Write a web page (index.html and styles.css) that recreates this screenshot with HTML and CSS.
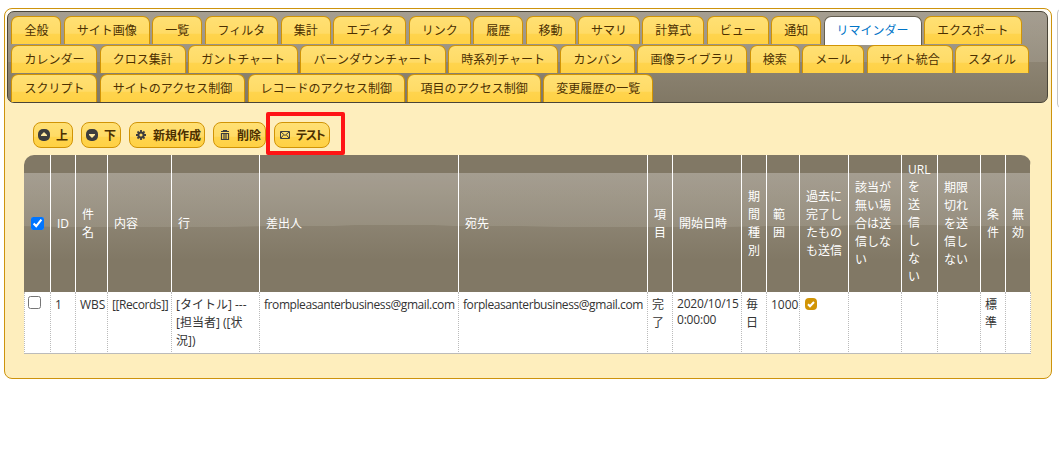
FILE: index.html
```html
<!DOCTYPE html>
<html lang="ja">
<head>
  <meta charset="UTF-8" />
  <meta name="viewport" content="width=device-width, initial-scale=1.0" />
  <title>リマインダー</title>
  <link rel="stylesheet" href="styles.css">
</head>
<body>
  <div class="page">
    <main class="editor">
      <ul class="tabs">
        <li>全般</li>
        <li>サイト画像</li>
        <li>一覧</li>
        <li>フィルタ</li>
        <li>集計</li>
        <li>エディタ</li>
        <li>リンク</li>
        <li>履歴</li>
        <li>移動</li>
        <li>サマリ</li>
        <li>計算式</li>
        <li>ビュー</li>
        <li>通知</li>
        <li class="active">リマインダー</li>
        <li>エクスポート</li>
        <li>カレンダー</li>
        <li>クロス集計</li>
        <li>ガントチャート</li>
        <li>バーンダウンチャート</li>
        <li>時系列チャート</li>
        <li>カンバン</li>
        <li>画像ライブラリ</li>
        <li>検索</li>
        <li>メール</li>
        <li>サイト統合</li>
        <li>スタイル</li>
        <li>スクリプト</li>
        <li>サイトのアクセス制御</li>
        <li>レコードのアクセス制御</li>
        <li>項目のアクセス制御</li>
        <li>変更履歴の一覧</li>
      </ul>

      <div class="commands">
        <button class="up"><svg viewBox="0 0 12 12"><rect width="12" height="12" rx="5" fill="#3d3d3d"/><path d="M3 7V6l3-3 3 3v1z" fill="#ffe9a0"/></svg><span>上</span></button>
        <button class="down"><svg viewBox="0 0 12 12"><rect width="12" height="12" rx="5" fill="#3d3d3d"/><path d="M3 5v1l3 3 3-3V5z" fill="#ffe9a0"/></svg><span>下</span></button>
        <button class="create"><svg viewBox="0 0 12 12" fill="none" stroke="#3d3d3d"><circle cx="6" cy="6" r="2.6" stroke-width="2"/><path d="M6 1v2M6 9v2M1 6h2M9 6h2M2.5 2.5l1.3 1.3M8.2 8.2l1.3 1.3M9.5 2.5 8.2 3.8M3.8 8.2 2.5 9.5" stroke-width="1.8"/></svg><span>新規作成</span></button>
        <button class="delete"><svg viewBox="0 0 12 12" fill="none" stroke="#3d3d3d"><path d="M2 2.5h8M4.5 2V1.5h3V2M2.5 4.5v6h7v-6zM5 5v5M7 5v5" stroke-width="1.2"/></svg><span>削除</span></button>
        <div class="highlight">
          <button class="test"><svg viewBox="0 0 12 12" fill="none" stroke="#3d3d3d"><path d="M1.5 2.5h9v7h-9zM2 3l4 3.5L10 3M2 9l2.5-3M10 9 7.5 6"/></svg><span>テスト</span></button>
        </div>
      </div>

      <table class="grid">
        <colgroup>
          <col class="w27"><col class="w25"><col class="w32"><col class="w64"><col class="w88"><col class="w199"><col class="w189"><col class="w25"><col class="w69"><col class="w25"><col class="w33"><col class="w49"><col class="w53"><col class="w36"><col class="w43"><col class="w25"><col class="w25">
        </colgroup>
        <thead>
          <tr>
            <th><input type="checkbox" checked /></th>
            <th>ID</th>
            <th>件名</th>
            <th>内容</th>
            <th>行</th>
            <th>差出人</th>
            <th>宛先</th>
            <th>項目</th>
            <th>開始日時</th>
            <th>期間種別</th>
            <th>範囲</th>
            <th>過去に完了したものも送信</th>
            <th>該当が無い場合は送信しない</th>
            <th><div class="latin">URL</div><div class="narrow">を送信しない</div></th>
            <th>期限切れを送信しない</th>
            <th>条件</th>
            <th>無効</th>
          </tr>
        </thead>
        <tbody>
          <tr>
            <td><input type="checkbox" /></td>
            <td>1</td>
            <td>WBS</td>
            <td class="tight">[[Records]]</td>
            <td>[タイトル] ---<br>[担当者] ([状況])</td>
            <td class="tight">frompleasanterbusiness@gmail.com</td>
            <td class="tight">forpleasanterbusiness@gmail.com</td>
            <td>完了</td>
            <td class="date">2020/10/15 0:00:00</td>
            <td>毎日</td>
            <td>1000</td>
            <td><svg class="check" viewBox="0 0 12 12"><rect width="12" height="12" rx="4" fill="#d19405"/><path d="m3 6.2 2 2L9 4" fill="none" stroke="#fff" stroke-width="2"/></svg></td>
            <td></td>
            <td></td>
            <td></td>
            <td>標準</td>
            <td></td>
          </tr>
        </tbody>
      </table>
    </main>
    <aside class="side"></aside>
  </div>
</body>
</html>
```

FILE: styles.css
```css
* {
  box-sizing: border-box;
}
body {
  margin: 0;
  background: #fff;
  color: #333;
  font-family: "Open Sans", "Noto Sans CJK JP", sans-serif;
  font-size: 12px;
  overflow: hidden;
}
.page {
  display: flex;
  align-items: flex-start;
  gap: 5px;
  width: 1100px;
  padding: 8px 0 0 4px;
}
.editor {
  flex: none;
  width: 1048px;
  height: 371px;
  padding: 2px;
  border: 1px solid #cd930c;
  border-radius: 8px;
  background: #feeebd linear-gradient(#fffdf6, #feeebd) 0 0 / 100% 100px no-repeat;
}
.side {
  flex: none;
  width: 30px;
  height: 99px;
  margin-top: 1px;
  border: 1px solid #c5c5c5;
  border-radius: 4px;
}

/* tabs */
.tabs {
  display: flex;
  flex-wrap: wrap;
  width: 1041px;
  margin: 0;
  padding: 3px 3px 0 3.4px;
  list-style: none;
  border: 1px solid #494437;
  border-radius: 7px;
  background:
    linear-gradient(rgba(255, 255, 255, .1) 50px, transparent 50px),
    linear-gradient(#9b9384, #817865);
}
.tabs li {
  height: 28px;
  margin: 1px 2.4px 0 0;
  padding: 0 12px;
  border: 1px solid #d19405;
  border-bottom: 0;
  border-radius: 7px 7px 0 0;
  background: linear-gradient(#ffe074, #ffdb66 60%, #ffd44d 64%, #ffd144);
  color: #4c3000;
  line-height: 27px;
  white-space: nowrap;
}
.tabs li.active {
  height: 29px;
  margin-bottom: -1px;
  border-color: #655e4e;
  background: #fff;
  color: #0074c7;
}

/* command buttons */
.commands {
  display: flex;
  gap: 8px;
  height: 52px;
  padding: 19px 0 0 26px;
}
.commands button {
  display: flex;
  align-items: center;
  gap: 6px;
  height: 26px;
  padding: 0 4px;
  border: 1px solid #d19405;
  border-radius: 8px;
  background: linear-gradient(#ffe074, #ffdb66 55%, #ffd44d 60%, #ffd144);
  color: #4c3000;
  font: bold 12px "Noto Sans CJK JP", sans-serif;
  line-height: 24px;
  white-space: nowrap;
}
.commands svg {
  flex: none;
  width: 12px;
  height: 12px;
}
.commands .up,
.commands .down {
  width: 40px;
}
.commands .create {
  width: 76px;
  padding-left: 5px;
}
.commands .delete {
  width: 53px;
  padding-left: 5px;
}
.commands .test {
  gap: 5px;
  width: 56px;
}
.commands .test span {
  letter-spacing: -1.4px;
  font-feature-settings: "palt";
}
.highlight {
  width: 79px;
  height: 43px;
  margin: -10px 0 0 -8px;
  padding: 6px 4px;
  border: 4px solid #ff1414;
  border-radius: 2px;
}

/* reminder grid */
.grid {
  width: 1007px;
  margin-left: 17px;
  table-layout: fixed;
  border-collapse: separate;
  border-spacing: 0;
  border-radius: 10px 10px 0 0;
  overflow: hidden;
}
.w25 { width: 25px; }
.w27 { width: 27px; }
.w32 { width: 32px; }
.w33 { width: 33px; }
.w36 { width: 36px; }
.w43 { width: 43px; }
.w49 { width: 49px; }
.w53 { width: 53px; }
.w64 { width: 64px; }
.w69 { width: 69px; }
.w88 { width: 88px; }
.w189 { width: 189px; }
.w199 { width: 199px; }
.grid thead tr {
  height: 137px;
  background:
    radial-gradient(ellipse 900px 54px at 50% 0, rgba(255, 255, 255, .1) 99.5%, transparent) -130px 18px / 500px 100px repeat-x,
    linear-gradient(#817865 18px, #9b9384 18px, #817865 105px);
}
.grid th {
  padding: 0 0 0 6px;
  border-right: 1px solid #fff;
  color: #fff;
  font-weight: normal;
  line-height: 18px;
  text-align: left;
  vertical-align: middle;
}
.grid th:not(:last-child) {
  padding-right: 5px;
}
.grid th:first-child {
  padding-left: 7px;
}
.grid th:last-child {
  border-right-color: #feeebd;
}
.grid th .latin {
  line-height: 16px;
}
.grid th .narrow {
  width: 14px;
}
.grid td {
  height: 62px;
  padding: 4px 0 3px 4px;
  border-right: 1px dotted #bbb;
  border-bottom: 1px solid #bbb;
  background: #fff;
  line-height: 18px;
  vertical-align: top;
}
.grid td:first-child {
  padding-left: 3px;
  border-left: 1px dotted #bbb;
}
.grid td.tight {
  letter-spacing: -.42px;
}
.grid td.date {
  letter-spacing: -.2px;
  line-height: 16px;
}
.grid input {
  display: block;
  width: 13px;
  height: 13px;
  margin: 0;
}
.grid .check {
  display: block;
  width: 12px;
  height: 12px;
  margin: 2px 0 0 1px;
}
```
